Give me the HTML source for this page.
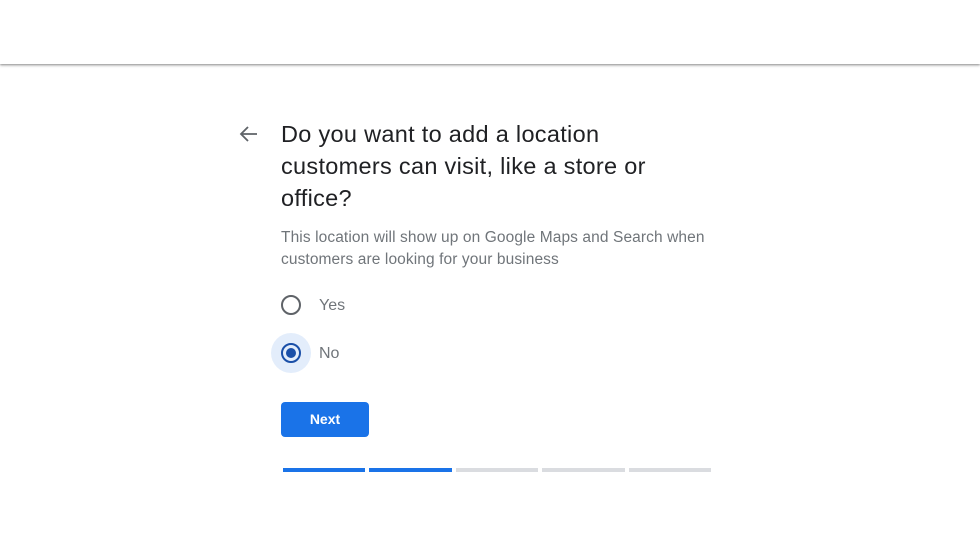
<!DOCTYPE html>
<html><head><style>
body{margin:0;width:980px;height:537px;background:#fff;font-family:"Liberation Sans",sans-serif;position:relative;overflow:hidden}
.hdr{position:absolute;left:0;top:0;width:980px;height:64px;background:#fff;box-shadow:0 1px 2px rgba(0,0,0,.35),0 2px 3px rgba(0,0,0,.12)}
.abs{position:absolute}
h1{position:absolute;left:281px;top:118px;margin:0;font-weight:400;font-size:23.5px;line-height:32px;color:#202124;white-space:nowrap;letter-spacing:0.3px}
.sub{left:281px;top:227px;font-size:15.5px;line-height:22px;color:#70757a;white-space:nowrap;letter-spacing:0.1px}
.lbl{font-size:16px;color:#70757a}
.btn{left:281px;top:402px;width:88px;height:35px;background:#1a73e8;border-radius:4px;color:#fff;font-weight:bold;font-size:14px;text-align:center;line-height:35px}
.bar{top:468px;height:4px}
</style></head><body>
<div class="hdr"></div>
<svg class="abs" style="left:238px;top:124px" width="22" height="20" viewBox="0 0 22 20"><path d="M19 10H4M10 3L3 10l7 7" fill="none" stroke="#5f6368" stroke-width="1.8"/></svg>
<h1>Do you want to add a location<br>customers can visit, like a store or<br>office?</h1>
<div class="abs sub">This location will show up on Google Maps and Search when<br>customers are looking for your business</div>
<svg class="abs" style="left:280px;top:294px" width="22" height="22"><circle cx="11" cy="11" r="9" fill="none" stroke="#5f6368" stroke-width="2"/></svg>
<div class="abs lbl" style="left:319px;top:297px">Yes</div>
<div class="abs" style="left:271px;top:333px;width:40px;height:40px;border-radius:50%;background:#e3edfb"></div>
<svg class="abs" style="left:280px;top:342px" width="22" height="22"><circle cx="11" cy="11" r="9" fill="none" stroke="#1a4fa8" stroke-width="2"/><circle cx="11" cy="11" r="5" fill="#1a4fa8"/></svg>
<div class="abs lbl" style="left:319px;top:345px">No</div>
<div class="abs btn">Next</div>
<div class="abs bar" style="left:283px;width:82px;background:#1a73e8"></div>
<div class="abs bar" style="left:369px;width:83px;background:#1a73e8"></div>
<div class="abs bar" style="left:456px;width:82px;background:#dadce0"></div>
<div class="abs bar" style="left:542px;width:83px;background:#dadce0"></div>
<div class="abs bar" style="left:629px;width:82px;background:#dadce0"></div>
</body></html>
